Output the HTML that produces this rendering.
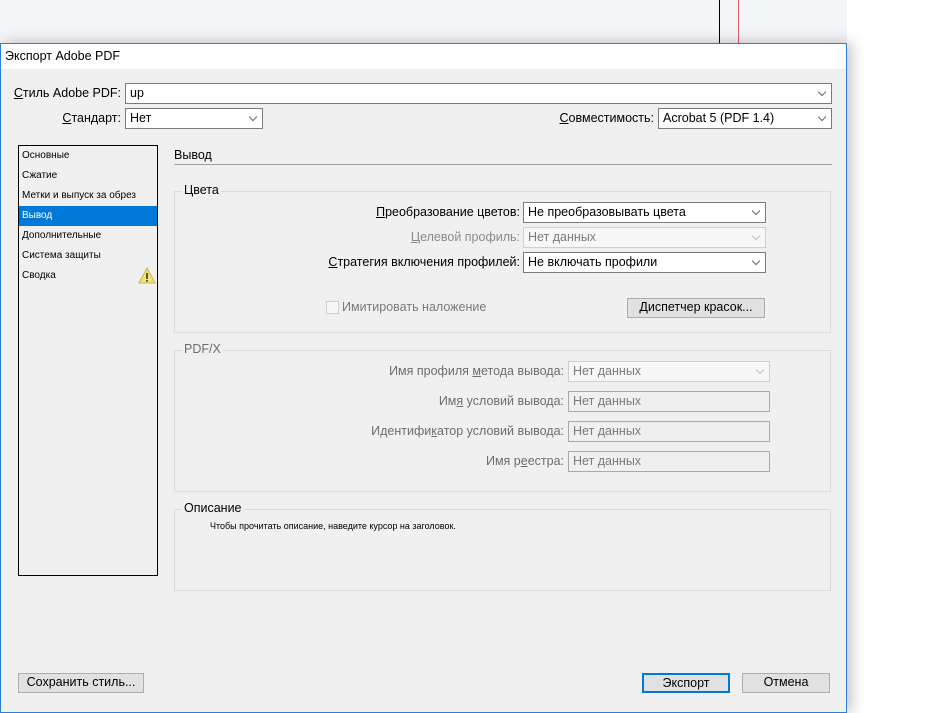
<!DOCTYPE html>
<html><head><meta charset="utf-8"><style>
*{margin:0;padding:0;box-sizing:border-box}
body{width:933px;height:708px;position:relative;overflow:hidden;background:#fff;font-family:"Liberation Sans",sans-serif;font-size:12.5px;color:#000}
.a{position:absolute}
.dlg{position:absolute;left:0;top:43px;width:847px;height:670px;background:#f0f0f0;border:1px solid #2b7fd4;box-shadow:4px 0 14px rgba(0,0,0,.25)}
.tb{position:absolute;left:0;top:0;right:0;height:25px;background:#fff}
.lbl{position:absolute;text-align:right;white-space:nowrap;line-height:21px}
.box{position:absolute;background:#fff;border:1px solid #7a7a7a;height:21px;line-height:19px;padding-left:4px;white-space:nowrap}
.dis{border-color:#cfcfcf;color:#7a7a7a;background:#f7f7f7}
.gray{color:#767676}
.chev{position:absolute;right:6px;top:5px;width:6px;height:6px;border-right:1px solid #666;border-bottom:1px solid #666;transform:rotate(45deg);transform-origin:center}
.grp{position:absolute;border:1px solid #dcdcdc}
.gl{position:absolute;background:#f0f0f0;padding:0 2px;line-height:14px}
.btn{position:absolute;background:#e1e1e1;border:1px solid #adadad;text-align:center;line-height:17px}
.li{position:absolute;left:3px;font-size:10px;line-height:20px;width:137px}
u{text-decoration:underline}
</style></head><body>
<div class="a" style="left:0;top:0;width:847px;height:43px;background:#f3f5f8"></div>
<div class="a" style="left:719px;top:0;width:1px;height:43px;background:#000"></div>
<div class="a" style="left:738px;top:0;width:1px;height:43px;background:#e35d6a"></div>

<div class="dlg">
<div class="tb"><span class="a" style="left:4px;top:5px;font-size:12.5px">Экспорт Adobe PDF</span></div>

<div class="lbl" style="left:0;width:120px;top:39px"><u>С</u>тиль Adobe PDF:</div>
<div class="box" style="left:124px;top:39px;width:707px">up<span class="chev"></span></div>
<div class="lbl" style="left:0;width:120px;top:64px"><u>С</u>тандарт:</div>
<div class="box" style="left:124px;top:64px;width:138px">Нет<span class="chev"></span></div>
<div class="lbl" style="left:400px;width:253px;top:64px"><u>С</u>овместимость:</div>
<div class="box" style="left:657px;top:64px;width:174px">Acrobat 5 (PDF 1.4)<span class="chev"></span></div>

<div class="a" style="left:17px;top:101px;width:140px;height:431px;border:1px solid #000;background:#f0f0f0">
<div class="li" style="top:0">Основные</div>
<div class="li" style="top:20px">Сжатие</div>
<div class="li" style="top:40px">Метки и выпуск за обрез</div>
<div class="a" style="left:0;top:60px;width:138px;height:20px;background:#0078d7"></div>
<div class="li" style="top:60px;color:#fff">Вывод</div>
<div class="li" style="top:80px">Дополнительные</div>
<div class="li" style="top:100px">Система защиты</div>
<div class="li" style="top:120px">Сводка</div>
<svg class="a" style="left:119px;top:121px" width="18" height="17" viewBox="0 0 18 17"><path d="M9 1L17 16H1Z" fill="#f3e27a" stroke="#c9b44a"/><rect x="8.2" y="6" width="1.6" height="6" fill="#333"/><rect x="8.2" y="13" width="1.6" height="1.6" fill="#333"/></svg>
</div>

<div class="a" style="left:173px;top:104px;font-size:12.5px">Вывод</div>
<div class="a" style="left:173px;top:120px;width:658px;height:1px;background:#a0a0a0"></div>

<div class="grp" style="left:173px;top:147px;width:657px;height:142px"></div>
<div class="gl" style="left:181px;top:139px">Цвета</div>
<div class="lbl" style="left:250px;width:269px;top:158px"><u>П</u>реобразование цветов:</div>
<div class="box" style="left:522px;top:158px;width:243px">Не преобразовывать цвета<span class="chev"></span></div>
<div class="lbl gray" style="left:250px;width:269px;top:183px;color:#8a8a8a"><u>Ц</u>елевой профиль:</div>
<div class="box dis" style="left:522px;top:183px;width:243px">Нет данных<span class="chev" style="border-color:#bbb"></span></div>
<div class="lbl" style="left:250px;width:269px;top:208px"><u>С</u>тратегия включения профилей:</div>
<div class="box" style="left:522px;top:208px;width:243px">Не включать профили<span class="chev"></span></div>
<div class="a" style="left:325px;top:257px;width:13px;height:13px;border:1px solid #cfcfcf;background:#f7f7f7"></div>
<div class="a" style="left:341px;top:256px;color:#7a7a7a">Имитировать наложение</div>
<div class="btn" style="left:626px;top:254px;width:138px;height:20px">Диспетчер красок...</div>

<div class="grp" style="left:173px;top:306px;width:657px;height:142px"></div>
<div class="gl" style="left:181px;top:298px;color:#6d6d6d">PDF/X</div>
<div class="lbl" style="left:250px;width:313px;top:317px;color:#6d6d6d">Имя профиля <u>м</u>етода вывода:</div>
<div class="box dis" style="left:567px;top:317px;width:202px">Нет данных<span class="chev" style="border-color:#bbb"></span></div>
<div class="lbl" style="left:250px;width:313px;top:347px;color:#6d6d6d">Им<u>я</u> условий вывода:</div>
<div class="box dis" style="left:567px;top:347px;width:202px;border-color:#a9a9a9;background:#f0f0f0">Нет данных</div>
<div class="lbl" style="left:250px;width:313px;top:377px;color:#6d6d6d">Идентифи<u>к</u>атор условий вывода:</div>
<div class="box dis" style="left:567px;top:377px;width:202px;border-color:#a9a9a9;background:#f0f0f0">Нет данных</div>
<div class="lbl" style="left:250px;width:313px;top:407px;color:#6d6d6d">Имя р<u>е</u>естра:</div>
<div class="box dis" style="left:567px;top:407px;width:202px;border-color:#a9a9a9;background:#f0f0f0">Нет данных</div>

<div class="grp" style="left:173px;top:465px;width:657px;height:82px"></div>
<div class="gl" style="left:181px;top:457px">Описание</div>
<div class="a" style="left:209px;top:477px;font-size:9px">Чтобы прочитать описание, наведите курсор на заголовок.</div>

<div class="btn" style="left:17px;top:629px;width:126px;height:20px">Сохранить стиль...</div>
<div class="btn" style="left:641px;top:629px;width:88px;height:20px;border:2px solid #0078d7;line-height:16px">Экспорт</div>
<div class="btn" style="left:741px;top:629px;width:88px;height:20px">Отмена</div>
</div>
</body></html>
